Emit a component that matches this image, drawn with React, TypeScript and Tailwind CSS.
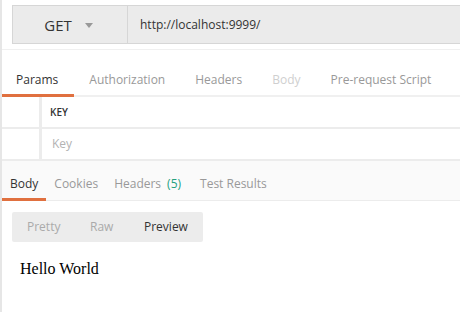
import React from "react";

export default function App() {
  const font = { fontFamily: '"Open Sans", "Liberation Sans", sans-serif' };
  return (
    <div className="w-[460px] h-[312px] overflow-hidden bg-white" style={font}>
      <div className="w-[560px] h-full border-l-2 border-[#e6e6e6] flex flex-col">
        {/* request bar */}
        <div className="pt-[5px] pl-[10px] pb-[5px] border-b border-[#f0f0f0]">
          <div className="flex h-[39px] bg-[#ebebeb] border border-[#d6d6d6]">
            <div className="w-[115px] flex items-center justify-center gap-[13px] border-r border-[#d6d6d6] pr-[3px] pt-[2px]">
              <span className="text-[15px] text-[#333] font-medium">GET</span>
              <svg width="8" height="5" viewBox="0 0 8 5" className="-mt-[1px]"><path d="M0 0 L8 0 L4 5 Z" fill="#999" /></svg>
            </div>
            <div className="flex-1 flex items-center pl-[12px] text-[12px] text-[#333]">http://localhost:9999/</div>
          </div>
        </div>
        {/* request tabs */}
        <div className="flex h-[47px] items-end border-b-2 border-[#f0f0f0]">
          <div className="pl-[14px] pr-[16px] pb-[5px] border-b-[3px] border-[#e0703f] text-[12px] text-[#333] -mb-[2px]">Params</div>
          <div className="px-[15px] pb-[6px] text-[12px] text-[#999]">Authorization</div>
          <div className="px-[15px] pb-[6px] text-[12px] text-[#999]">Headers</div>
          <div className="px-[15px] pb-[6px] text-[12px] text-[#cfcfcf]">Body</div>
          <div className="px-[15px] pb-[6px] text-[12px] text-[#999]">Pre-request Script</div>
        </div>
        {/* table */}
        <div className="flex h-[32px] border-b-2 border-[#ececec]">
          <div className="w-[40px] border-r-[3px] border-[#ececec]" />
          <div className="flex items-center pl-[8px] text-[10px] font-semibold text-[#333]">KEY</div>
        </div>
        <div className="flex h-[32px] border-b-2 border-[#ececec]">
          <div className="w-[40px] border-r-[3px] border-[#ececec]" />
          <div className="flex items-center pl-[10px] text-[12px] text-[#b3b3b3]">Key</div>
        </div>
        {/* response tabs */}
        <div className="flex h-[40px] items-end bg-[#fafafa] border-b border-[#ececec]">
          <div className="px-[8px] pb-[5px] border-b-[3px] border-[#e0703f] text-[12px] text-[#333] -mb-[1px]">Body</div>
          <div className="px-[8px] pb-[7px] text-[12px] text-[#999]">Cookies</div>
          <div className="pl-[8px] pr-[11px] pb-[7px] text-[12px] text-[#999]">
            Headers<span className="ml-[6px] text-[#26a17e]">(5)</span>
          </div>
          <div className="px-[8px] pb-[7px] text-[12px] text-[#999]">Test Results</div>
        </div>
        {/* body */}
        <div className="pt-[11px] pl-[10px]">
          <div className="flex w-[191px] h-[30px] bg-[#ececec] rounded-[2px] text-[12px]">
            <div className="w-[63px] flex items-center pl-[15px] text-[#aaa]">Pretty</div>
            <div className="w-[54px] flex items-center pl-[15px] text-[#aaa]">Raw</div>
            <div className="flex-1 flex items-center pl-[15px] text-[#333]">Preview</div>
          </div>
          <div
            className="pt-[15px] pl-[8px] text-[16px] text-black"
            style={{ fontFamily: '"Liberation Serif", "DejaVu Serif", serif' }}
          >
            Hello World
          </div>
        </div>
      </div>
    </div>
  );
}
